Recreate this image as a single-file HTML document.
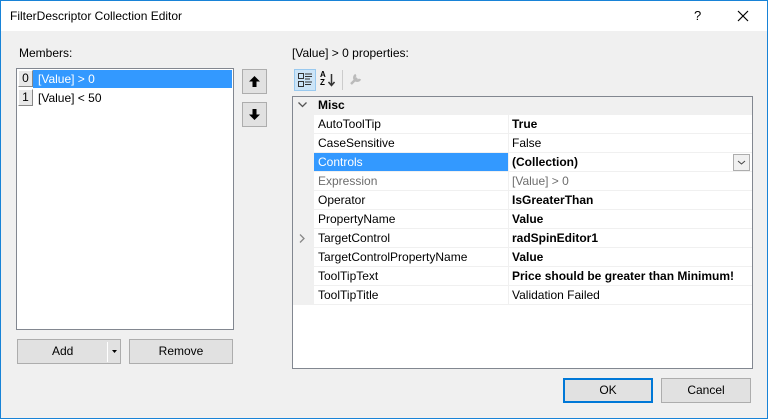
<!DOCTYPE html>
<html><head><style>
*{margin:0;padding:0;box-sizing:border-box}
body{width:768px;height:419px;background:#f0f0f0;font-family:"Liberation Sans",sans-serif;font-size:12px;color:#000;position:relative;overflow:hidden}
.a{position:absolute}
.btn{position:absolute;background:#e1e1e1;border:1px solid #adadad;text-align:center;line-height:22px}
.row{position:absolute;left:314px;width:438px;height:19px;border-bottom:1px solid #f0f0f0;background:#fff}
.row .n{position:absolute;left:4px;top:2px;width:190px}
.row .v{position:absolute;left:194px;top:2px;width:244px;height:18px;border-left:1px solid #f0f0f0;padding-left:3px;top:0;line-height:18px}
.row .n{line-height:18px;top:0}
b{font-weight:bold}
</style></head><body>
<div class="a" style="left:0;top:0;width:768px;height:419px;border:1px solid #1883d7"></div>
<div class="a" style="left:1px;top:1px;width:766px;height:30px;background:#fff"></div>
<div class="a" style="left:10px;top:9px;font-size:12px">FilterDescriptor Collection Editor</div>
<div class="a" style="left:694px;top:8px;font-size:13px">?</div>
<svg class="a" style="left:737px;top:10px" width="12" height="12"><path d="M1 1L11 11M11 1L1 11" stroke="#000" stroke-width="1.2"/></svg>

<div class="a" style="left:19px;top:46px">Members:</div>
<div class="a" style="left:16px;top:68px;width:218px;height:262px;background:#fff;border:1px solid #828790"></div>
<div class="a" style="left:33px;top:70px;width:199px;height:18px;background:#3399ff"></div>
<div class="a" style="left:18px;top:70px;width:15px;height:17px;background:#e8e8e8;border:1px solid #888;border-top-color:#fff;border-left-color:#fff;text-align:center;line-height:15px">0</div>
<div class="a" style="left:18px;top:89px;width:15px;height:17px;background:#e8e8e8;border:1px solid #888;border-top-color:#fff;border-left-color:#fff;text-align:center;line-height:15px">1</div>
<div class="a" style="left:38px;top:72px;color:#fff">[Value] &gt; 0</div>
<div class="a" style="left:38px;top:91px">[Value] &lt; 50</div>

<div class="btn" style="left:242px;top:69px;width:25px;height:25px"><svg width="11" height="11" style="margin-top:6px"><path d="M5.5 0L0 5.5H3.5V11H7.5V5.5H11Z" fill="#000"/></svg></div>
<div class="btn" style="left:242px;top:102px;width:25px;height:25px"><svg width="11" height="11" style="margin-top:6px"><path d="M5.5 11L0 5.5H3.5V0H7.5V5.5H11Z" fill="#000"/></svg></div>

<div class="btn" style="left:17px;top:339px;width:104px;height:25px">
<span style="position:absolute;left:34px;top:0">Add</span>
<span style="position:absolute;left:89px;top:2px;width:1px;height:20px;background:#fff"></span>
<svg class="a" style="left:94px;top:10px" width="5" height="4"><path d="M0 0H5L2.5 3Z" fill="#000"/></svg></div>
<div class="btn" style="left:129px;top:339px;width:104px;height:25px">Remove</div>

<div class="a" style="left:292px;top:46px">[Value] &gt; 0 properties:</div>
<div class="a" style="left:294px;top:69px;width:22px;height:22px;background:#cce4f7;border:1px solid #99c9ef"></div>
<svg class="a" style="left:298px;top:73px" width="14" height="14"><g fill="none" stroke="#333"><rect x="0.5" y="0.5" width="5" height="5"/><rect x="0.5" y="8.5" width="5" height="5"/></g><g stroke="#333"><path d="M7 1h7M7 3.5h7M7 6h5M7 9h7M7 11.5h6"/></g></svg>
<div class="a" style="left:320px;top:71px;font-size:8px;font-weight:bold;line-height:8px">A<br>Z</div>
<svg class="a" style="left:328px;top:73px" width="7" height="14"><path d="M3.5 1V12M0.5 9L3.5 12.5 6.5 9" stroke="#333" fill="none" stroke-width="1.5"/></svg>
<div class="a" style="left:342px;top:70px;width:1px;height:20px;background:#ccc"></div>
<svg class="a" style="left:349px;top:73px" width="13" height="13"><path d="M2 11L8 5M7 2a3 3 0 1 0 4 4" stroke="#bbb" stroke-width="2.5" fill="none"/></svg>

<div class="a" style="left:292px;top:96px;width:461px;height:273px;background:#fff;border:1px solid #828790"></div>
<div class="a" style="left:293px;top:97px;width:21px;height:208px;background:#f0f0f0"></div>
<div class="a" style="left:293px;top:97px;width:459px;height:18px;background:#f0f0f0"></div>
<svg class="a" style="left:298px;top:102px" width="9" height="6"><path d="M0.5 0.5L4.5 4.5 8.5 0.5" stroke="#555" fill="none" stroke-width="1.3"/></svg>
<div class="a" style="left:318px;top:98px;font-weight:bold">Misc</div>

<div class="row" style="top:115px"><div class="n">AutoToolTip</div><div class="v"><b>True</b></div></div>
<div class="row" style="top:134px"><div class="n">CaseSensitive</div><div class="v">False</div></div>
<div class="row" style="top:153px"><div class="n" style="background:#3399ff;color:#fff;left:0;padding-left:4px;width:194px;height:18px">Controls</div><div class="v"><b>(Collection)</b></div>
<div class="a" style="left:419px;top:1px;width:17px;height:17px;border:1px solid #adadad;background:#f0f0f0"><svg width="15" height="15"><path d="M4 6L7.5 9 11 6" stroke="#444" fill="none"/></svg></div></div>
<div class="row" style="top:172px;color:#6d6d6d"><div class="n">Expression</div><div class="v">[Value] &gt; 0</div></div>
<div class="row" style="top:191px"><div class="n">Operator</div><div class="v"><b>IsGreaterThan</b></div></div>
<div class="row" style="top:210px"><div class="n">PropertyName</div><div class="v"><b>Value</b></div></div>
<div class="row" style="top:229px"><div class="n">TargetControl</div><div class="v"><b>radSpinEditor1</b></div></div>
<svg class="a" style="left:299px;top:234px" width="6" height="9"><path d="M1 0.5L5 4.5 1 8.5" stroke="#888" fill="none" stroke-width="1.3"/></svg>
<div class="row" style="top:248px"><div class="n">TargetControlPropertyName</div><div class="v"><b>Value</b></div></div>
<div class="row" style="top:267px"><div class="n">ToolTipText</div><div class="v"><b>Price should be greater than Minimum!</b></div></div>
<div class="row" style="top:286px"><div class="n">ToolTipTitle</div><div class="v">Validation Failed</div></div>

<div class="btn" style="left:563px;top:378px;width:90px;height:25px;border:2px solid #0078d7;line-height:21px">OK</div>
<div class="btn" style="left:661px;top:378px;width:90px;height:25px">Cancel</div>
</body></html>
